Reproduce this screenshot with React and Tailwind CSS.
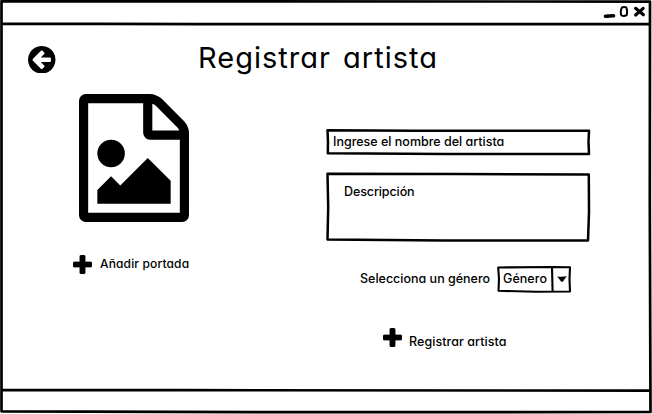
import React from "react";

const PLUS =
  "M1408 736v192q0 40-28 68t-68 28h-416v416q0 40-28 68t-68 28h-192q-40 0-68-28t-28-68v-416h-416q-40 0-68-28t-28-68v-192q0-40 28-68t68-28h416v-416q0-40 28-68t68-28h192q40 0 68 28t28 68v416h416q40 0 68 28t28 68z";

function PlusIcon() {
  return (
    <svg className="h-[19px] w-[19px] shrink-0" viewBox="0 128 1408 1408" stroke="#000" strokeWidth="50">
      <path d={PLUS} />
    </svg>
  );
}

function BackIcon() {
  return (
    <svg className="mt-[0.5px] h-[27.500px] w-[27.500px]" viewBox="0 128 1536 1536">
      <path d="M1280 960v-128q0-26-19-45t-45-19h-502l189-189q19-19 19-45t-19-45l-91-91q-18-18-45-18t-45 18l-362 362-91 91q-18 18-18 45t18 45l91 91 362 362q18 18 45 18t45-18l91-91q18-18 18-45t-18-45l-189-189h502q26 0 45-19t19-45zm256-64q0 209-103 385.500t-279.500 279.500-385.500 103-385.500-103-279.500-279.500-103-385.500 103-385.500 279.500-279.500 385.500-103 385.500 103 279.500 279.500 103 385.500z" />
    </svg>
  );
}

function ImageFileIcon() {
  return (
    <svg className="h-32 w-[110px]" viewBox="0 0 1536 1792" preserveAspectRatio="none">
      <path d="M1468 380q28 28 48 76t20 88v1152q0 40-28 68t-68 28h-1344q-40 0-68-28t-28-68v-1600q0-40 28-68t68-28h896q40 0 88 20t76 48zm-444-244v376h376q-10-29-22-41l-313-313q-12-12-41-22zm384 1528v-1024h-416q-40 0-68-28t-28-68v-416h-768v1536h1280zm-128-448v320h-1024v-192l192-192 128 128 384-384zm-832-192q-80 0-136-56t-56-136 56-136 136-56 136 56 56 136-56 136-136 56z" />
    </svg>
  );
}

// Hand-drawn outline that lies over the edges of its box.
function Sketch({ w, h, d, width = 2.5 }) {
  return (
    <svg
      className="pointer-events-none absolute inset-0 h-full w-full"
      viewBox={`0 0 ${w} ${h}`}
      fill="none"
      stroke="#000"
      strokeWidth={width}
      strokeLinejoin="round"
      strokeLinecap="round"
    >
      <path d={d} />
    </svg>
  );
}

export default function App() {
  return (
    <div className="relative flex h-[414px] w-[652px] flex-col overflow-hidden bg-white font-['Inter',sans-serif] text-[12.500px] leading-4 font-medium text-black [font-feature-settings:'cv11']">
      <header className="flex h-[25px] shrink-0 items-start justify-end pt-[6px] pr-[6px]">
        <svg className="h-3 w-[44px]" viewBox="0 0 44 12" fill="none" stroke="#000">
          <path d="M3.500 10.200 L11.500 9.800" strokeWidth="3.600" strokeLinecap="round" />
          <path d="M20 1.400 Q22 .8 24.200 1.400 Q25.800 5 24.600 9.200 Q22 10.800 19.400 9.400 Q17.800 5 20 1.400Z" strokeWidth="2" />
          <path d="M33.600 2.300 L41.400 8.800 M41.200 2.300 L33.600 9" strokeWidth="3.100" strokeLinecap="round" />
        </svg>
      </header>

      <main className="flex h-[365px] shrink-0">
        <section className="flex w-[198px] shrink-0 flex-col pt-5 pl-7">
          <BackIcon />
          <div className="mt-[21px] ml-[51px]">
            <ImageFileIcon />
          </div>
          <button className="mt-[33px] ml-[45px] flex items-center gap-[8px] whitespace-nowrap">
            <PlusIcon />
            <span className="relative -top-px text-[12px] tracking-[0.150px]">Añadir portada</span>
          </button>
        </section>

        <section className="flex flex-col pt-[13px]">
          <h1 className="h-10 text-[29px] leading-10 font-normal whitespace-nowrap tracking-[1px] [word-spacing:3px]">Registrar artista</h1>
          <form className="ml-[127px] flex flex-col pt-[50px]">
            <div className="relative flex h-[28px] w-[266px] items-center pl-2">
              <span className="whitespace-nowrap">Ingrese el nombre del artista</span>
              <Sketch w={266} h={28} d="M2.500 2.300 L90 2.800 L264 2.700 L263.500 14 L264 26 L120 26 L2.800 25.300 L3 14Z" />
            </div>
            <div className="relative mt-4 h-[70px] w-[266px] pt-[12px] pl-[19px]">
              <span className="tracking-[-0.100px]">Descripción</span>
              <Sketch w={266} h={70} d="M2.500 1.800 L130 2.100 L263.800 2.600 L264 40 L263 68.500 L120 68.500 L2.500 67.600 L3.200 35Z" />
            </div>
            <div className="mt-[23px] ml-[35px] flex items-center">
              <span className="w-[136px] whitespace-nowrap">Selecciona un género</span>
              <div className="relative flex h-[28px] w-[76px] items-center pl-[7px]">
                <span className="tracking-[0.050px]">Género</span>
                <Sketch w={76} h={28} width={2.1} d="M2.200 2.500 L56 2 L74 2.200 L73.500 14 L74 26.500 L40 26.800 L2.500 25.800 L3 14Z M56 2.300 L56.600 26.300" />
                <svg className="ml-auto mr-[5px] h-[6px] w-[10px]" viewBox="0 0 10 6">
                  <path d="M.2 .4 Q5 1 9.800 .3 L5.700 5.700 H4.300Z" />
                </svg>
              </div>
            </div>
            <button type="button" className="mt-[35px] ml-[58px] flex items-center gap-[7px] whitespace-nowrap">
              <PlusIcon />
              <span className="relative top-[4px] tracking-[0.060px]">Registrar artista</span>
            </button>
          </form>
        </section>
      </main>
      <footer className="h-6 shrink-0" />
      <Sketch w={652} h={414} width={2.7} d="M1.500 1.200 L180 1.300 L650 1.600 L649.800 200 L650.500 412 L300 412.200 L1.500 411.300 L1.500 200Z M2 23.700 L200 24.200 L649 24 M2 390 L180 390.200 L649 390.600" />
    </div>
  );
}
